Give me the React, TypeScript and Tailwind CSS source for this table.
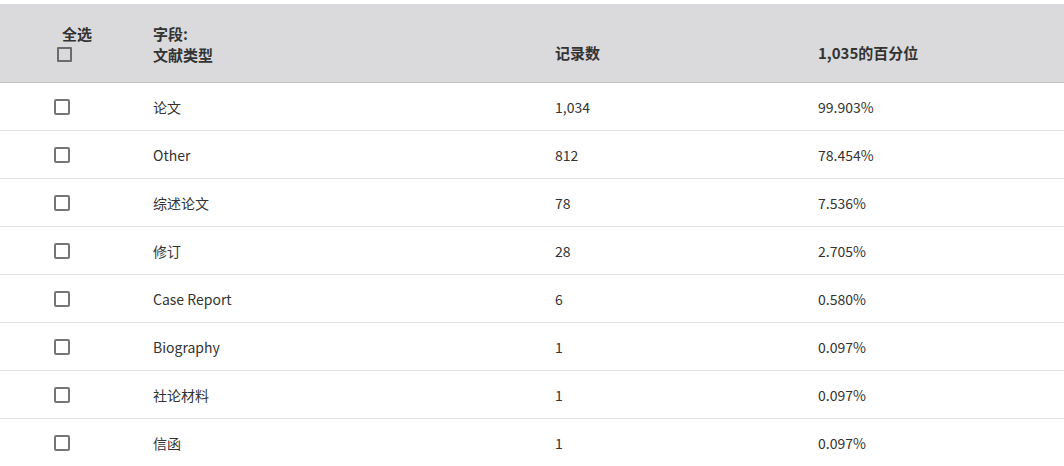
const rows = [
  { name: "论文", count: "1,034", pct: "99.903%" },
  { name: "Other", count: "812", pct: "78.454%" },
  { name: "综述论文", count: "78", pct: "7.536%" },
  { name: "修订", count: "28", pct: "2.705%" },
  { name: "Case Report", count: "6", pct: "0.580%" },
  { name: "Biography", count: "1", pct: "0.097%" },
  { name: "社论材料", count: "1", pct: "0.097%" },
  { name: "信函", count: "1", pct: "0.097%" },
];

function Box() {
  return <span className="block h-4 w-4 rounded-[2px] border-2 border-[#757575] bg-white" />;
}

export default function App() {
  return (
    <div
      className="min-h-screen bg-white pt-1 text-[14px] text-[#333]"
      style={{ fontFamily: '"Noto Sans CJK SC", "Noto Sans", sans-serif' }}
    >
      {/* Header */}
      <div className="grid h-[79px] grid-cols-[153px_402px_263px_1fr] border-b border-[#c6c6c8] bg-[#dadadc] text-[15px] font-semibold leading-5">
        <div className="flex flex-col pl-[57px] pt-[20px]">
          <span className="pl-[5px]">全选</span>
          <span className="mt-[3px] block h-[15px] w-[15px] rounded-[1px] border-2 border-[#6b6b6b]" />
        </div>
        <div className="pt-[20px]">
          <div>字段:</div>
          <div className="mt-[1px]">文献类型</div>
        </div>
        <div className="flex items-end pb-[19px]">记录数</div>
        <div className="flex items-end pb-[19px]">1,035的百分位</div>
      </div>

      {/* Rows */}
      {rows.map((r) => (
        <div
          key={r.name}
          className="grid h-12 grid-cols-[153px_402px_263px_1fr] items-center border-b border-[#e0e0e0] pt-[1px]"
        >
          <div className="pl-[54px]">
            <Box />
          </div>
          <div>{r.name}</div>
          <div>{r.count}</div>
          <div>{r.pct}</div>
        </div>
      ))}
    </div>
  );
}
